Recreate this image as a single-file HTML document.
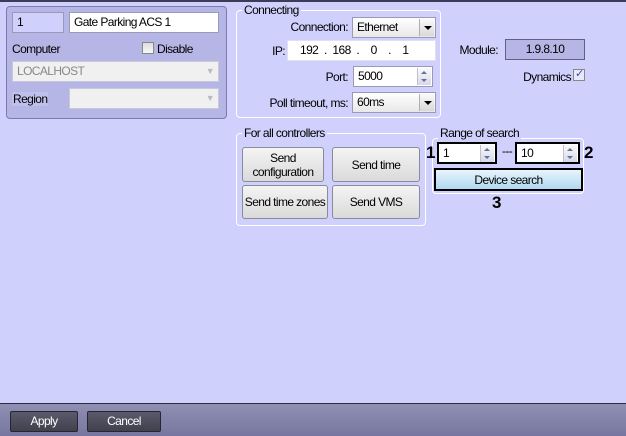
<!DOCTYPE html>
<html><head><style>
*{box-sizing:border-box;margin:0;padding:0}
body{width:626px;height:436px;position:relative;overflow:hidden;background:#d0d0fc;font-family:"Liberation Sans",sans-serif;font-size:12px;color:#000;letter-spacing:-0.6px}
.a{position:absolute;white-space:nowrap}
.r{position:absolute;white-space:nowrap;text-align:right}
.top{left:0;top:0;width:626px;height:2px;background:#3c3c58}
.lp{left:6px;top:6px;width:221px;height:113px;background:#b6b6e6;border:1px solid #7c7cac;border-radius:4px}
.f{position:absolute;background:#fff;border:1px solid #9a9ab8;height:21px;line-height:19px;padding-left:4px;white-space:nowrap}
.grp{position:absolute;border:1px solid #fff;border-radius:4px}
.gl{position:absolute;background:#d0d0fc;padding:0 2px;line-height:12px;white-space:nowrap}
.combo{position:absolute;background:linear-gradient(#fff,#e8e8e8);border:1px solid #9a9ab8;height:21px;line-height:19px;padding-left:4px}
.dd{position:absolute;right:1px;top:1px;width:15px;height:17px;background:linear-gradient(#fafafa,#d8d8d8);border-left:1px solid #b0b0b0}
.dd:after{content:"";position:absolute;left:4px;top:7px;border-left:4px solid transparent;border-right:4px solid transparent;border-top:4px solid #000}
.sp{position:absolute;right:1px;top:1px;width:14px;height:17px;background:linear-gradient(#fafafa,#d8d8e8);border-left:1px solid #c0c0d0}
.sp:before{content:"";position:absolute;left:3px;top:3px;border-left:3px solid transparent;border-right:3px solid transparent;border-bottom:3px solid #6070a0}
.sp:after{content:"";position:absolute;left:3px;top:11px;border-left:3px solid transparent;border-right:3px solid transparent;border-top:3px solid #6070a0}
.btn{position:absolute;background:linear-gradient(#f4f4f4,#dadada);border:1px solid #8a8a9a;border-radius:3px;text-align:center;display:flex;align-items:center;justify-content:center;line-height:14px;white-space:nowrap}
.big{font-weight:bold;font-size:17px;position:absolute}
.bot{left:0;top:403px;width:626px;height:33px;background:linear-gradient(#9090b4,#7676a0);border-top:1px solid #2c2c40}
.bb{position:absolute;top:7px;height:21px;background:linear-gradient(#5a5a6c,#40404e);border:1px solid #26262e;border-radius:2px;color:#fff;text-align:center;line-height:19px}
.cb{position:absolute;width:12px;height:12px;border:1px solid #888;background:linear-gradient(#ddd,#f8f8f8)}
</style></head><body>
<div class="a top"></div>
<div class="a lp"></div>
<div class="f" style="left:12px;top:12px;width:52px;background:#d0d0fc">1</div>
<div class="f" style="left:69px;top:12px;width:150px">Gate Parking ACS 1</div>
<div class="a" style="left:12px;top:42px">Computer</div>
<div class="cb" style="left:142px;top:42px"></div>
<div class="a" style="left:157px;top:42px">Disable</div>
<div class="f" style="left:12px;top:61px;width:207px;background:#f0f0f0;color:#888;border-color:#c8c8d8">LOCALHOST<span class="a" style="right:4px;top:0;color:#bbb;font-size:9px">▼</span></div>
<div class="a" style="left:12px;top:92px;background:#c0c0ec;padding:0 1px">Region</div>
<div class="f" style="left:69px;top:88px;width:150px;background:#f0f0f0;border-color:#c8c8d8"><span class="a" style="right:4px;top:0;color:#bbb;font-size:9px">▼</span></div>

<div class="grp" style="left:236px;top:10px;width:205px;height:108px"></div>
<div class="gl" style="left:242px;top:4px">Connecting</div>
<div class="r" style="right:278px;top:20px">Connection:</div>
<div class="combo" style="left:352px;top:17px;width:84px">Ethernet<div class="dd"></div></div>
<div class="r" style="right:341px;top:44px">IP:</div>
<div class="f" style="left:287px;top:40px;width:149px;border-color:#e0e0f0;padding-left:12px;word-spacing:3px">192 . 168 . &nbsp;0 &nbsp;. &nbsp;1</div>
<div class="r" style="right:278px;top:70px">Port:</div>
<div class="f" style="left:353px;top:66px;width:80px">5000<div class="sp"></div></div>
<div class="r" style="right:278px;top:96px">Poll timeout, ms:</div>
<div class="combo" style="left:352px;top:92px;width:84px">60ms<div class="dd"></div></div>

<div class="r" style="right:128px;top:43px">Module:</div>
<div class="f" style="left:505px;top:39px;width:80px;background:#b6b6e6;border-color:#606080;text-align:center;padding:0">1.9.8.10</div>
<div class="r" style="right:55px;top:70px">Dynamics</div>
<div class="cb" style="left:573px;top:69px;background:#e8e8f8"><span class="a" style="left:1px;top:-3px;font-size:11px;color:#3050a0">✓</span></div>

<div class="grp" style="left:236px;top:133px;width:190px;height:93px"></div>
<div class="gl" style="left:242px;top:127px">For all controllers</div>
<div class="btn" style="left:242px;top:147px;width:82px;height:35px">Send<br>configuration</div>
<div class="btn" style="left:332px;top:147px;width:88px;height:35px">Send time</div>
<div class="btn" style="left:242px;top:185px;width:86px;height:34px">Send time zones</div>
<div class="btn" style="left:332px;top:185px;width:88px;height:34px">Send VMS</div>

<div class="grp" style="left:432px;top:138px;width:152px;height:56px"></div>
<div class="gl" style="left:438px;top:127px">Range of search</div>
<div class="f" style="left:437px;top:142px;width:60px;height:22px;border:2px solid #000">1<div class="sp"></div></div>
<div class="a" style="left:502px;top:144px">---</div>
<div class="f" style="left:515px;top:142px;width:65px;height:22px;border:2px solid #000">10<div class="sp"></div></div>
<div class="btn" style="left:434px;top:168px;width:149px;height:23px;border:2px solid #000;border-radius:0;background:linear-gradient(#e8f4fc,#b0d8f0)">Device search</div>
<div class="big" style="left:426px;top:143px">1</div>
<div class="big" style="left:584px;top:143px">2</div>
<div class="big" style="left:492px;top:193px">3</div>

<div class="a bot">
<div class="bb" style="left:10px;width:68px">Apply</div>
<div class="bb" style="left:87px;width:74px">Cancel</div>
</div>
</body></html>
